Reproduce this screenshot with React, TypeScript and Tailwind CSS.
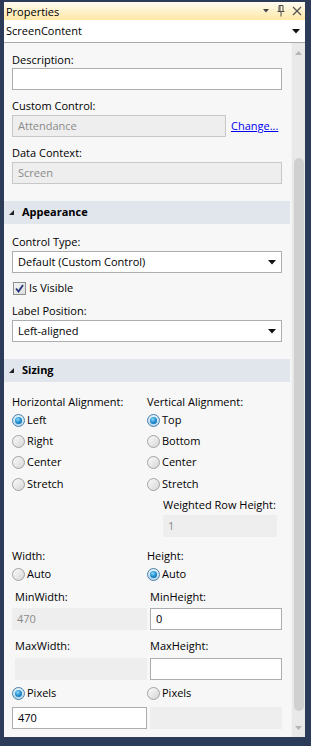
import React from "react";

function Label({ children, className = "" }: { children: React.ReactNode; className?: string }) {
  return <div className={"h-[16px] leading-[16px] text-[#000] " + className}>{children}</div>;
}

function TextBox({ value = "", className = "" }: { value?: string; className?: string }) {
  return (
    <div className={"h-[22px] bg-white border border-[#abadb3] pl-[5px] flex items-center text-[#000] " + className}>
      {value}
    </div>
  );
}

function DisabledBox({ value = "", bordered = false, className = "" }: { value?: string; bordered?: boolean; className?: string }) {
  return (
    <div
      className={
        "h-[22px] bg-[#eeeeee] pl-[5px] flex items-center text-[#8a8a8a] " +
        (bordered ? "border border-[#c8c8c8] " : "") +
        className
      }
    >
      {value}
    </div>
  );
}

function Arrow() {
  return (
    <svg width="8" height="5" viewBox="0 0 8 5">
      <path d="M0 0 H8 L4 4.5 Z" fill="#111" />
    </svg>
  );
}

function Select({ value }: { value: string }) {
  return (
    <div className="h-[22px] bg-white border border-[#abadb3] pl-[5px] pr-[5px] flex items-center justify-between text-[#000]">
      <span>{value}</span>
      <Arrow />
    </div>
  );
}

function Radio({ checked = false, label, className = "" }: { checked?: boolean; label: string; className?: string }) {
  return (
    <div className={"flex items-center h-[21px] " + className}>
      <span
        className={
          "w-[13px] h-[13px] rounded-full border flex items-center justify-center " +
          (checked
            ? "border-[#4a7fab] bg-linear-to-b from-[#e2f1fa] to-[#b6d8ec]"
            : "border-[#a2a2a2] bg-linear-to-br from-[#fbfbfb] to-[#d6d6d6]")
        }
      >
        {checked && (
          <span className="w-[7px] h-[7px] rounded-full bg-[radial-gradient(circle_at_40%_35%,#86d8ff,#1a86c8_55%,#0d5f99)]" />
        )}
      </span>
      <span className="ml-[2px] text-[#000]">{label}</span>
    </div>
  );
}

function SectionHeader({ title }: { title: string }) {
  return (
    <div className="h-[23px] -ml-[8px] -mr-[8px] bg-[#e1e5ec] flex items-center pl-[5px]">
      <svg width="5" height="5" viewBox="0 0 5 5" className="mr-[8px]">
        <path d="M5 0 V5 H0 Z" fill="#222" />
      </svg>
      <span className="font-bold text-[#000]">{title}</span>
    </div>
  );
}

export default function App() {
  return (
    <div className="w-[311px] h-[746px] bg-[#2b3b58] pt-[2px] pl-[4px] pr-[6px] pb-[9px] flex flex-col font-['Open_Sans','Noto_Sans',sans-serif] text-[11px]">
      {/* Title bar */}
      <div className="h-[18px] shrink-0 bg-linear-to-b from-[#fffcf2] via-[#fff2cc] to-[#ffe8a6] flex items-center pl-[2px] pr-[3px]">
        <span className="text-[11px] text-[#000] leading-none">Properties</span>
        <div className="ml-auto flex items-center">
          <svg width="6" height="4" viewBox="0 0 6 4" className="mr-[8px]">
            <path d="M0 0 H6 L3 3.5 Z" fill="#444" />
          </svg>
          <svg width="8" height="12" viewBox="0 0 8 12" className="mr-[7px]">
            <path d="M2 0.5 H6 M2 0.5 V6.5 M6 0.5 V6.5 M3 0.5 V6.5 M0.5 6.5 H7.5 M4 6.5 V11.5" stroke="#4a4a4a" strokeWidth="1" fill="none" />
          </svg>
          <svg width="10" height="10" viewBox="0 0 10 10">
            <path d="M1 1 L9 9 M9 1 L1 9" stroke="#555" strokeWidth="1.3" />
          </svg>
        </div>
      </div>
      {/* Combo */}
      <div className="h-[23px] shrink-0 bg-white border-b border-[#a9a9a9] flex items-center pl-[2px] pr-[5px] justify-between">
        <span className="text-[11px] text-[#000]">ScreenContent</span>
        <Arrow />
      </div>
      {/* Content */}
      <div className="flex-1 flex bg-[#f7f7f7] min-h-0">
        <div className="flex-1 pl-[8px] pr-[9px] pt-[9px] flex flex-col">
          <Label>Description:</Label>
          <TextBox />
          <Label className="mt-[8px]">Custom Control:</Label>
          <div className="mt-[1px] flex items-center">
            <DisabledBox value="Attendance" bordered className="w-[214px]" />
            <span className="ml-[5px] text-[#0000ee] underline">Change...</span>
          </div>
          <Label className="mt-[8px]">Data Context:</Label>
          <DisabledBox value="Screen" bordered className="mt-[1px]" />

          <div className="mt-[17px]">
            <SectionHeader title="Appearance" />
          </div>
          <Label className="mt-[10px]">Control Type:</Label>
          <div className="mt-[1px]">
            <Select value="Default (Custom Control)" />
          </div>
          <div className="mt-[7px] h-[16px] flex items-center">
            <span className="ml-[1px] w-[13px] h-[13px] border border-[#8e8f8f] bg-linear-to-br from-[#f4f4f4] to-[#dedede] flex items-center justify-center">
              <svg width="9" height="9" viewBox="0 0 9 9">
                <path d="M1 4.5 L3.5 7.5 L8 1" stroke="#23337a" strokeWidth="1.8" fill="none" />
              </svg>
            </span>
            <span className="ml-[3px] text-[#000]">Is Visible</span>
          </div>
          <Label className="mt-[7px]">Label Position:</Label>
          <div className="mt-[1px]">
            <Select value="Left-aligned" />
          </div>

          <div className="mt-[17px]">
            <SectionHeader title="Sizing" />
          </div>

          <div className="mt-[12px] grid grid-cols-2">
            <div className="flex flex-col">
              <Label>Horizontal Alignment:</Label>
              <Radio checked label="Left" />
              <Radio label="Right" />
              <Radio label="Center" />
              <Radio label="Stretch" className="mt-[1px]" />
            </div>
            <div className="flex flex-col">
              <Label>Vertical Alignment:</Label>
              <Radio checked label="Top" />
              <Radio label="Bottom" />
              <Radio label="Center" />
              <Radio label="Stretch" className="mt-[1px]" />
            </div>
          </div>

          <div className="grid grid-cols-2 mt-[2px]">
            <div />
            <div className="pl-[16px] pr-[5px]">
              <Label>Weighted Row Height:</Label>
              <DisabledBox value="1" className="mt-[2px]" />
            </div>
          </div>

          <div className="grid grid-cols-2 mt-[11px]">
            <div>
              <Label>Width:</Label>
              <Radio label="Auto" />
            </div>
            <div>
              <Label>Height:</Label>
              <Radio checked label="Auto" />
            </div>
          </div>

          <div className="grid grid-cols-2 mt-[4px]">
            <div>
              <Label className="pl-[3px]">MinWidth:</Label>
              <DisabledBox value="470" className="mt-[3px]" />
            </div>
            <div className="pl-[3px]">
              <Label>MinHeight:</Label>
              <TextBox value="0" className="mt-[3px]" />
            </div>
          </div>

          <div className="grid grid-cols-2 mt-[8px]">
            <div>
              <Label className="pl-[3px]">MaxWidth:</Label>
              <DisabledBox className="mt-[4px] ml-[3px]" />
            </div>
            <div className="pl-[3px]">
              <Label>MaxHeight:</Label>
              <TextBox className="mt-[4px]" />
            </div>
          </div>

          <div className="grid grid-cols-2 mt-[3px]">
            <div>
              <Radio checked label="Pixels" />
              <TextBox value="470" className="mt-[3px]" />
            </div>
            <div>
              <Radio label="Pixels" />
              <DisabledBox className="mt-[3px] ml-[3px]" />
            </div>
          </div>
        </div>

        {/* Scrollbar */}
        <div className="w-[14px] shrink-0 bg-[#e9e9e9] border-l border-[#f3f3f3] flex flex-col items-center">
          <div className="h-[20px] flex items-center justify-center">
            <svg width="7" height="4" viewBox="0 0 7 4">
              <path d="M0 4 H7 L3.5 0 Z" fill="#b5b5b5" />
            </svg>
          </div>
          <div className="h-[95px]" />
          <div className="h-[553px] w-[10px] rounded-[5px] bg-[#d0d0d0]" />
          <div className="flex-1" />
          <div className="h-[18px] flex items-center justify-center">
            <svg width="7" height="4" viewBox="0 0 7 4">
              <path d="M0 0 H7 L3.5 4 Z" fill="#b5b5b5" />
            </svg>
          </div>
        </div>
      </div>
    </div>
  );
}
